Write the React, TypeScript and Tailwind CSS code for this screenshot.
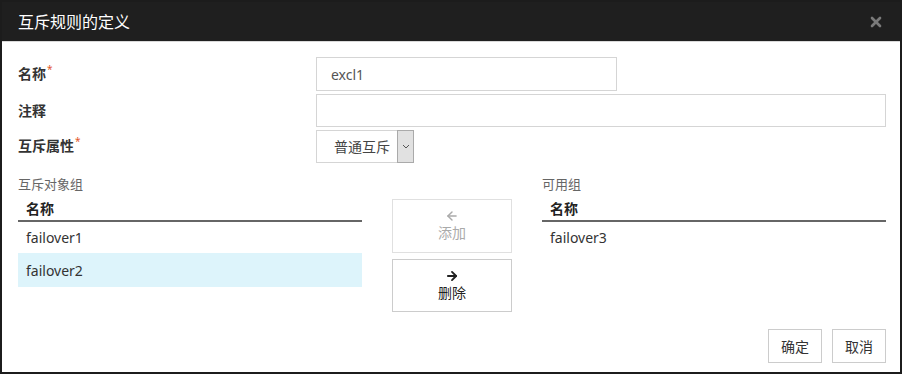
import React from "react";
import { ArrowLeft, ArrowRight, X } from "lucide-react";

const font = { fontFamily: '"Noto Sans", "Noto Sans CJK SC", sans-serif' };

function Label({ text, required }: { text: string; required?: boolean }) {
  return (
    <div className="w-[298px] shrink-0 text-[14px] font-bold text-[#333] leading-[18px]">
      {text}
      {required && <span className="text-[#e2572b] font-normal text-[10px] ml-[1px] relative -top-[6px]">*</span>}
    </div>
  );
}

function GroupTable({ title, rows, selected }: { title: string; rows: string[]; selected?: number }) {
  return (
    <div className="w-[344px] shrink-0">
      <div className="h-[18px] leading-[18px] text-[13px] text-[#666]">{title}</div>
      <div className="h-[29px] pt-[7px] px-2 border-b-2 border-[#666] text-[14px] font-bold text-[#222] leading-[18px]">名称</div>
      {rows.map((r, i) => (
        <div
          key={r}
          className={
            "px-2 flex items-center text-[14px] text-[#333] " +
            (i === 0 ? "h-[31px] " : "h-[34px] ") +
            (selected === i ? "bg-[#ddf4fb]" : "")
          }
        >
          {r}
        </div>
      ))}
    </div>
  );
}

export default function App() {
  return (
    <div className="w-[904px] h-[376px] bg-white" style={font}>
      <div className="w-[902px] h-[374px] border-2 border-[#1c1c1c] flex flex-col">
        <div className="h-[40px] bg-[#1f1f1f] border-b border-[#d9d9d9] flex items-center justify-between pl-4 pr-[16px] shrink-0">
          <span className="text-white text-[16px]">互斥规则的定义</span>
          <X className="w-[16px] h-[16px] text-[#7a7a7a]" strokeWidth={4} />
        </div>

        <div className="flex-1 flex flex-col pl-4 pr-[14px] pt-[15px] pb-[9px]">
          <div className="flex items-center h-[34px] mb-[3px]">
            <Label text="名称" required />
            <div className="w-[301px] h-[34px] border border-[#d5d5d5] px-[14px] flex items-center text-[14px] text-[#555]">excl1</div>
          </div>
          <div className="flex items-center h-[33px] mb-[3px]">
            <Label text="注释" />
            <div className="flex-1 h-[33px] border border-[#d5d5d5]" />
          </div>
          <div className="flex items-center h-[33px]">
            <Label text="互斥属性" required />
            <div className="w-[98px] h-[33px] border border-[#d5d5d5] flex">
              <div className="flex-1 pl-[17px] flex items-center text-[14px] text-[#444]">普通互斥</div>
              <div className="w-[17px] border border-[#aaa] bg-[#e1e1e1] -my-px -mr-px flex items-center justify-center">
                <svg width="8" height="5" viewBox="0 0 8 5"><path d="M1 1l3 3 3-3" fill="none" stroke="#555" strokeWidth="1" /></svg>
              </div>
            </div>
          </div>

          <div className="flex mt-[12px]">
            <GroupTable title="互斥对象组" rows={["failover1", "failover2"]} selected={1} />
            <div className="w-[120px] ml-[30px] mt-[24px] flex flex-col gap-[6px] shrink-0">
              <div className="h-[54px] border border-[#e0e0e0] flex flex-col items-center justify-center text-[#aaa] text-[14px]">
                <ArrowLeft className="w-[14px] h-[14px]" strokeWidth={2.5} />
                <span className="leading-[20px]">添加</span>
              </div>
              <div className="h-[53px] border border-[#ccc] flex flex-col items-center justify-center text-[#222] text-[14px]">
                <ArrowRight className="w-[14px] h-[14px]" strokeWidth={3.25} />
                <span className="leading-[20px]">删除</span>
              </div>
            </div>
            <div className="ml-[30px]">
              <GroupTable title="可用组" rows={["failover3"]} />
            </div>
          </div>

          <div className="mt-auto flex justify-end gap-[10px]">
            <div className="w-[54px] h-[34px] border border-[#ccc] flex items-center justify-center text-[14px] text-[#333]">确定</div>
            <div className="w-[54px] h-[34px] border border-[#ccc] flex items-center justify-center text-[14px] text-[#333]">取消</div>
          </div>
        </div>
      </div>
    </div>
  );
}
